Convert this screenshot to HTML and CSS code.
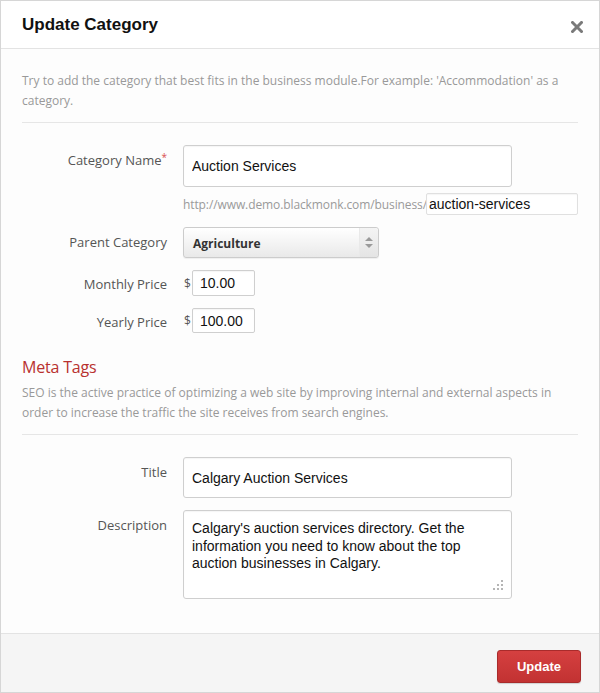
FILE: index.html
```html
<!DOCTYPE html>
<html>
<head>
<meta charset="utf-8">
<link rel="stylesheet" href="styles.css">
</head>
<body>
<div class="modal">
  <div class="modal-header">
    <h1 class="modal-title">Update Category</h1>
    <span class="close" aria-label="close">
      <svg width="12" height="12" viewBox="0 0 12 12"><path d="M1.5 1.5 L10.5 10.5 M10.5 1.5 L1.5 10.5" stroke="#7a7a7a" stroke-width="3" stroke-linecap="square"/></svg>
    </span>
  </div>
  <div class="modal-body">
    <p class="intro">Try to add the category that best fits in the business module.For example: 'Accommodation' as a category.</p>
    <hr class="sep">
    <div class="form">
      <div class="row row-name">
        <label class="lbl">Category Name<span class="req">*</span></label>
        <div class="ctl"><input class="txt big" type="text" value="Auction Services"></div>
      </div>
      <div class="row row-url">
        <span></span>
        <div class="ctl url"><span class="url-base">http://www.demo.blackmonk.com/business/</span><input class="txt slug" type="text" value="auction-services"></div>
      </div>
      <div class="row row-select">
        <label class="lbl">Parent Category</label>
        <div class="ctl">
          <div class="select"><span class="sel-val">Agriculture</span><span class="sel-arrow"><svg width="8" height="11" viewBox="0 0 8 11"><path d="M4 0 L8 4 L0 4 Z M4 11 L8 7 L0 7 Z" fill="#9a9a9a"/></svg></span></div>
        </div>
      </div>
      <div class="row row-price">
        <label class="lbl">Monthly Price</label>
        <div class="ctl price"><span class="cur">$</span><input class="txt num" type="text" value="10.00"></div>
      </div>
      <div class="row row-price row-yearly">
        <label class="lbl">Yearly Price</label>
        <div class="ctl price"><span class="cur">$</span><input class="txt num num2" type="text" value="100.00"></div>
      </div>
    </div>
    <h2 class="section">Meta Tags</h2>
    <p class="section-desc">SEO is the active practice of optimizing a web site by improving internal and external aspects in order to increase the traffic the site receives from search engines.</p>
    <hr class="sep sep2">
    <div class="form form2">
      <div class="row row-name">
        <label class="lbl">Title</label>
        <div class="ctl"><input class="txt big title" type="text" value="Calgary Auction Services"></div>
      </div>
      <div class="row row-desc">
        <label class="lbl">Description</label>
        <div class="ctl area-wrap"><textarea class="txt area">Calgary's auction services directory. Get the information you need to know about the top auction businesses in Calgary.</textarea>
          <svg class="grip" width="12" height="12" viewBox="0 0 12 12" fill="#b5b5b5">
            <rect x="9" y="1" width="2" height="2"/>
            <rect x="5" y="5" width="2" height="2"/><rect x="9" y="5" width="2" height="2"/>
            <rect x="1" y="9" width="2" height="2"/><rect x="5" y="9" width="2" height="2"/><rect x="9" y="9" width="2" height="2"/>
          </svg>
        </div>
      </div>
    </div>
  </div>
  <div class="modal-footer">
    <button class="btn">Update</button>
  </div>
</div>
</body>
</html>
```

FILE: styles.css
```css
* { box-sizing: border-box; }
html, body { margin: 0; padding: 0; background: #fff; }
.modal {
  width: 600px;
  height: 693px;
  border: 1px solid #d6d6d6;
  display: flex;
  flex-direction: column;
  background: #fdfdfd;
  font-family: "Open Sans", "Liberation Sans", sans-serif;
}
.modal-header {
  height: 48px;
  border-bottom: 1px solid #e3e3e3;
  background: #fff;
  display: flex;
  align-items: center;
  justify-content: space-between;
  padding: 0 16px 0 21px;
}
.modal-title {
  margin: 0;
  font-family: "Liberation Sans", Arial, sans-serif;
  font-weight: bold;
  font-size: 17px;
  color: #111;
}
.close { display: flex; padding-top: 4px; }
.modal-body {
  flex: 1;
  padding: 0 21px;
}
.intro {
  margin: 22px 0 0;
  font-size: 12px;
  line-height: 20px;
  color: #999;
}
.sep {
  margin: 11px 0 0;
  border: 0;
  border-top: 1px solid #e6e6e6;
  height: 0;
}
.form { margin-top: 22px; }
.row {
  display: grid;
  grid-template-columns: 145px 1fr;
  column-gap: 16px;
}
.lbl {
  text-align: right;
  font-size: 13px;
  line-height: 20px;
  color: #555;
  padding-top: 5px;
}
.req { color: #d85050; font-size: 10px; vertical-align: top; position: relative; top: -3px; }
.txt {
  font-family: "Liberation Sans", Arial, sans-serif;
  font-size: 13px;
  color: #111;
  border: 1px solid #cfcfcf;
  border-radius: 3px;
  background: #fff;
  box-shadow: inset 0 1px 1px rgba(0,0,0,0.04);
  outline: none;
  margin: 0;
}
.big { width: 329px; height: 42px; padding: 0 8px; font-size: 14px; }
.row-url { margin-top: 6px; }
.url { display: flex; align-items: center; }
.url-base { font-size: 12px; color: #9a9a9a; width: 243px; white-space: nowrap; letter-spacing: -0.1px; }
.slug { width: 152px; height: 22px; padding: 0 2px; border-radius: 2px; border-color: #e0e0e0; font-size: 14px; }
.row-select { margin-top: 12px; }
.select {
  width: 196px;
  height: 31px;
  border: 1px solid #cccccc;
  border-radius: 3px;
  background: linear-gradient(#ffffff, #e9e9e9);
  display: flex;
  align-items: center;
  justify-content: space-between;
  box-shadow: 0 1px 1px rgba(0,0,0,0.06);
}
.sel-val { font-size: 12px; font-weight: bold; color: #333; padding-left: 9px; padding-top: 1px; }
.sel-arrow {
  width: 19px;
  height: 29px;
  display: flex;
  align-items: center;
  justify-content: center;
  background: linear-gradient(#f4f4f4, #e4e4e4);
  border-left: 1px solid #e9e9e9;
  border-radius: 0 3px 3px 0;
}
.row-select .lbl { padding-top: 5px; }
.row-price { margin-top: 12px; }
.row-price .lbl { padding-top: 4px; }
.price { display: flex; align-items: center; }
.cur { width: 9px; font-size: 12px; color: #555; padding-left: 1px; }
.num { width: 63px; height: 26px; padding: 0 7px; font-size: 14px; border-radius: 2px; }
.num2 { height: 25px; }
.section {
  margin: 22px 0 0;
  font-weight: normal;
  font-size: 16px;
  line-height: 24px;
  color: #b8312f;
  letter-spacing: -0.2px;
}
.section-desc {
  margin: 4px 0 0;
  font-size: 12px;
  line-height: 20px;
  color: #999;
}
.sep2 { margin-top: 11px; }
.form2 { margin-top: 22px; }
.title { height: 41px; }
.row-desc { margin-top: 12px; }
.area-wrap { position: relative; width: 329px; }
.area {
  display: block;
  width: 329px;
  height: 89px;
  padding: 9px 8px 6px;
  font-size: 14px;
  line-height: 17.5px;
  resize: none;
}
.grip { position: absolute; right: 8px; bottom: 8px; }
.modal-footer {
  height: 59px;
  border-top: 1px solid #e3e3e3;
  background: #f5f5f5;
  display: flex;
  justify-content: flex-end;
  align-items: flex-start;
  padding: 16px 18px 0 0;
}
.btn {
  width: 84px;
  height: 33px;
  border: 1px solid #a92b2b;
  border-radius: 3px;
  background: linear-gradient(#d54040, #c23232);
  color: #fff;
  font-family: "Liberation Sans", Arial, sans-serif;
  font-weight: bold;
  font-size: 13px;
  box-shadow: 0 1px 1px rgba(0,0,0,0.15);
  padding: 0;
}
```
